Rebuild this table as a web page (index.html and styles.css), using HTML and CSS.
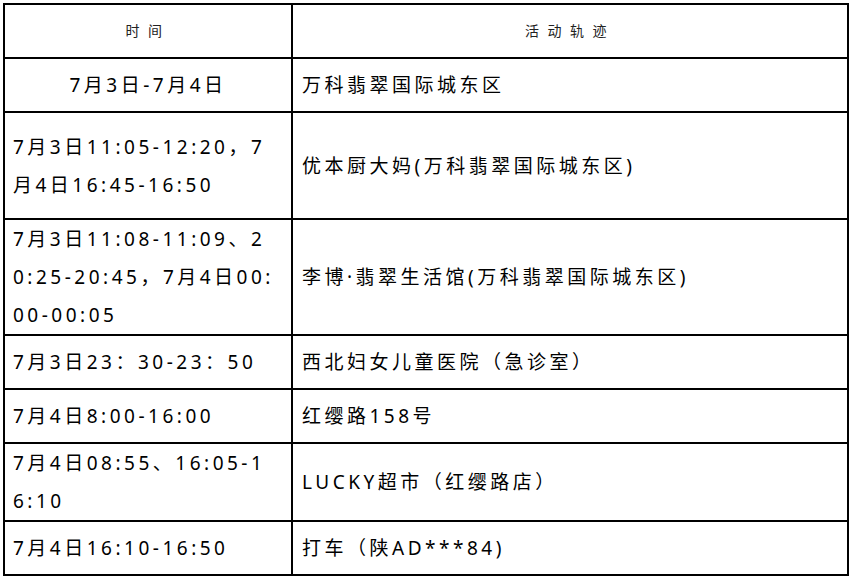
FILE: index.html
```html
<!DOCTYPE html>
<html lang="zh-CN">
<head>
<meta charset="utf-8">
<title>活动轨迹</title>
<link rel="stylesheet" href="styles.css">
</head>
<body>
<div class="wrap">
<table class="track">
  <tr class="h54">
    <th class="c1">时间</th>
    <th class="c2">活动轨迹</th>
  </tr>
  <tr class="h54">
    <td class="c1 center">7月3日-7月4日</td>
    <td class="c2">万科翡翠国际城东区</td>
  </tr>
  <tr class="h107">
    <td class="c1">7月3日11:05-12:20，7<br>月4日16:45-16:50</td>
    <td class="c2">优本厨大妈(万科翡翠国际城东区)</td>
  </tr>
  <tr class="h116">
    <td class="c1">7月3日11:08-11:09、2<br>0:25-20:45，7月4日00:<br>00-00:05</td>
    <td class="c2">李博·翡翠生活馆(万科翡翠国际城东区)</td>
  </tr>
  <tr class="h54">
    <td class="c1">7月3日23：30-23：50</td>
    <td class="c2">西北妇女儿童医院（急诊室）</td>
  </tr>
  <tr class="h54">
    <td class="c1">7月4日8:00-16:00</td>
    <td class="c2">红缨路158号</td>
  </tr>
  <tr class="h78">
    <td class="c1">7月4日08:55、16:05-1<br>6:10</td>
    <td class="c2">LUCKY超市（红缨路店）</td>
  </tr>
  <tr class="h54">
    <td class="c1">7月4日16:10-16:50</td>
    <td class="c2">打车（陕AD***84)</td>
  </tr>
</table>
</div>
</body>
</html>
```

FILE: styles.css
```css
html, body {
  margin: 0;
  padding: 0;
  background: #fff;
}

.wrap {
  padding: 3px 0 0 3px;
}

.track {
  border-collapse: separate;
  border-spacing: 0;
  table-layout: fixed;
  width: 846px;
  border-top: 2px solid #000;
  border-left: 2px solid #000;
  font-family: "Noto Sans", "Noto Sans CJK SC", sans-serif;
  color: #000;
}

.track th,
.track td {
  box-sizing: border-box;
  border-right: 2px solid #000;
  border-bottom: 2px solid #000;
  vertical-align: middle;
  padding: 0;
  white-space: nowrap;
}

.track th {
  font-size: 14px;
  font-weight: normal;
  letter-spacing: 8.5px;
  color: #222;
  text-align: center;
  line-height: 20px;
}

.track td {
  font-size: 19px;
  letter-spacing: 3.5px;
  line-height: 38px;
  text-align: left;
}

.track .c1 {
  width: 288px;
}

.track .c2 {
  width: 556px;
}

.track td.c1 {
  padding-left: 8px;
}

.track td.c2 {
  padding-left: 9px;
}

.track td.center {
  text-align: center;
  padding-left: 0;
}

.h54 { height: 54px; }
.h107 { height: 107px; }
.h116 { height: 116px; }
.h78 { height: 78px; }
```
